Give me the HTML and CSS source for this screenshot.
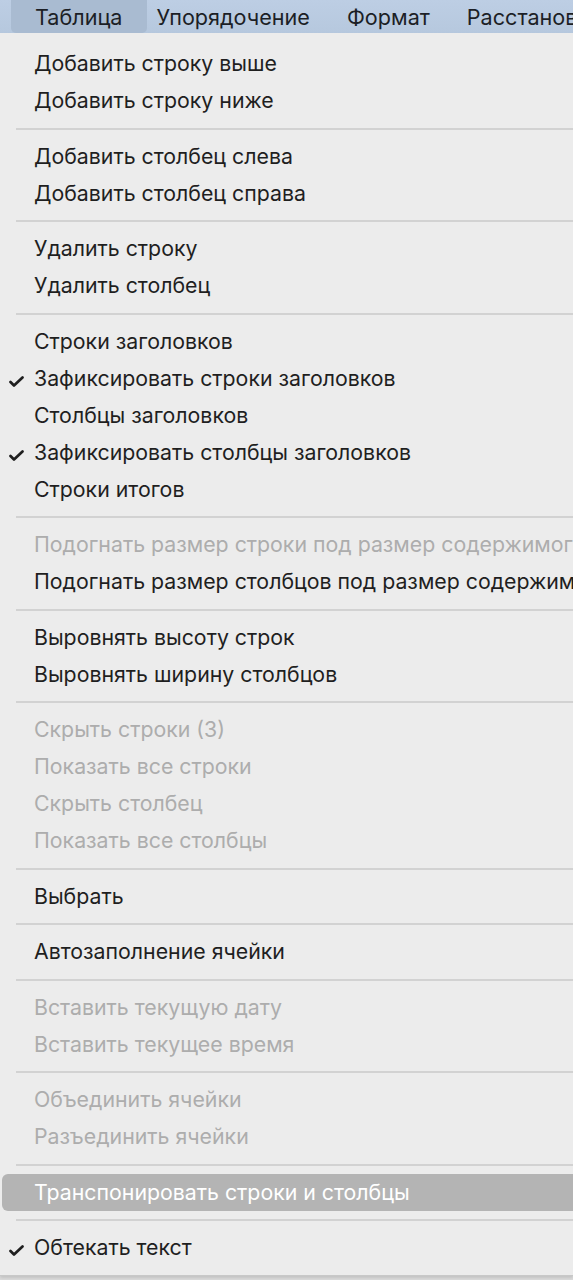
FILE: index.html
```html
<!DOCTYPE html>
<html>
<head>
    <title>Таблица</title>
    <link rel="stylesheet" href="styles.css">
</head>
<body>
    <div class="menubar">
        <span class="menubar-item active">Таблица</span>
        <span class="menubar-item">Упорядочение</span>
        <span class="menubar-item">Формат</span>
        <span class="menubar-item">Расстановка</span>
    </div>

    <div class="menu">
        <div class="item">Добавить строку выше</div>
        <div class="item">Добавить строку ниже</div>
        <div class="sep"></div>
        <div class="item">Добавить столбец слева</div>
        <div class="item">Добавить столбец справа</div>
        <div class="sep"></div>
        <div class="item">Удалить строку</div>
        <div class="item">Удалить столбец</div>
        <div class="sep"></div>
        <div class="item">Строки заголовков</div>
        <div class="item checked">Зафиксировать строки заголовков</div>
        <div class="item">Столбцы заголовков</div>
        <div class="item checked">Зафиксировать столбцы заголовков</div>
        <div class="item">Строки итогов</div>
        <div class="sep"></div>
        <div class="item disabled">Подогнать размер строки под размер содержимого</div>
        <div class="item">Подогнать размер столбцов под размер содержимого</div>
        <div class="sep"></div>
        <div class="item">Выровнять высоту строк</div>
        <div class="item">Выровнять ширину столбцов</div>
        <div class="sep"></div>
        <div class="item disabled">Скрыть строки (3)</div>
        <div class="item disabled">Показать все строки</div>
        <div class="item disabled">Скрыть столбец</div>
        <div class="item disabled">Показать все столбцы</div>
        <div class="sep"></div>
        <div class="item">Выбрать</div>
        <div class="sep"></div>
        <div class="item">Автозаполнение ячейки</div>
        <div class="sep"></div>
        <div class="item disabled">Вставить текущую дату</div>
        <div class="item disabled">Вставить текущее время</div>
        <div class="sep"></div>
        <div class="item disabled">Объединить ячейки</div>
        <div class="item disabled">Разъединить ячейки</div>
        <div class="sep"></div>
        <div class="item selected">Транспонировать строки и столбцы</div>
        <div class="sep"></div>
        <div class="item checked">Обтекать текст</div>
    </div>
</body>
</html>
```

FILE: styles.css
```css
body {
    margin: 0;
    width: 573px;
    height: 1280px;
    overflow: hidden;
    background-color: #dcdcdc;
    font-family: Inter, "Liberation Sans", sans-serif;
    color: #1f1f1f;
}

.menubar {
    display: flex;
    height: 33px;
    padding-left: 16.5px;
    background: linear-gradient(#bdcee4, #b6c8de);
    white-space: nowrap;
    overflow: hidden;
}

.menubar-item {
    display: flex;
    align-items: center;
    padding: 0 18.5px;
    font-size: 21.6px;
    color: #1c1f26;
}

.menubar-item.active {
    margin: 0 -9px 0 -6px;
    padding: 0 24.5px;
    background-color: #a9bbd1;
    border-radius: 0 0 5px 5px;
}

.menu {
    background-color: #ececec;
    padding: 12px 0 9px;
    border-bottom: 1px solid #c8c8c8;
    box-shadow: 0 2px 3px rgba(0, 0, 0, 0.12);
}

.item {
    position: relative;
    height: 37px;
    line-height: 37px;
    padding-left: 34px;
    font-size: 21.3px;
    white-space: nowrap;
    overflow: hidden;
}

.item.checked::before {
    content: "";
    position: absolute;
    left: 9px;
    top: 16px;
    width: 15px;
    height: 11px;
    background: no-repeat center / contain url("data:image/svg+xml;utf8,<svg xmlns='http://www.w3.org/2000/svg' viewBox='0 0 15 11'><path d='M1.5 6 L5 9.5 L13.5 1.5' fill='none' stroke='%231f1f1f' stroke-width='2.7' stroke-linecap='round' stroke-linejoin='round'/></svg>");
}

.item.disabled {
    color: #adadad;
}

.item.selected {
    margin-left: 2px;
    padding-left: 32px;
    background-color: #b4b4b4;
    border-radius: 6px 0 0 6px;
    color: #fff;
}

.sep {
    height: 2px;
    margin: 8.5px 0 8px 16px;
    background-color: #d2d2d2;
}
```
